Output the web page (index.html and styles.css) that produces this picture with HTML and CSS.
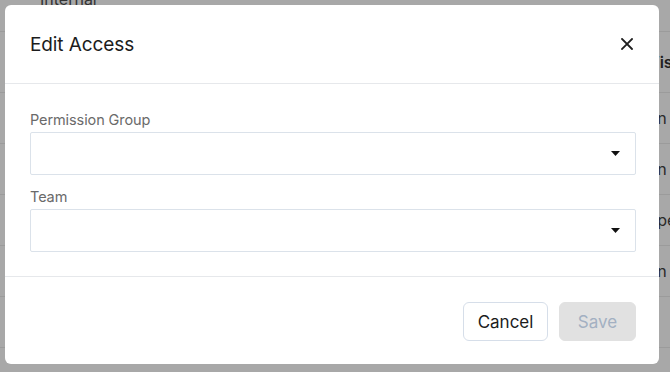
FILE: index.html
```html
<!DOCTYPE html>
<html lang="en">
<head>
<meta charset="utf-8">
<title>Edit Access</title>
<link rel="stylesheet" href="styles.css">
</head>
<body>
<div class="page">
  <div class="table">
    <div class="row row-top"><span class="cell-left">Internal</span></div>
    <div class="row row-head"><span class="cell-right head">Visibility</span></div>
    <div class="row"><span class="cell-right cell-short">In</span></div>
    <div class="row"><span class="cell-right cell-short">In</span></div>
    <div class="row"><span class="cell-right cell-open">Open</span></div>
    <div class="row"><span class="cell-right cell-short">In</span></div>
    <div class="row"></div>
  </div>
</div>

<div class="modal" role="dialog" aria-labelledby="modal-title">
  <div class="modal-header">
    <h2 class="modal-title" id="modal-title">Edit Access</h2>
    <button class="close-btn" aria-label="Close">
      <svg width="12" height="12" viewBox="0 0 12 12"><path d="M1 1 L11 11 M11 1 L1 11" stroke="#1f1f1f" stroke-width="1.8" stroke-linecap="square" fill="none"/></svg>
    </button>
  </div>
  <div class="modal-body">
    <div class="field">
      <label class="field-label">Permission Group</label>
      <div class="select">
        <svg class="caret" width="9" height="5" viewBox="0 0 9 5"><path d="M0 0 H9 L4.5 5 Z" fill="#111"/></svg>
      </div>
    </div>
    <div class="field">
      <label class="field-label">Team</label>
      <div class="select">
        <svg class="caret" width="9" height="5" viewBox="0 0 9 5"><path d="M0 0 H9 L4.5 5 Z" fill="#111"/></svg>
      </div>
    </div>
  </div>
  <div class="modal-footer">
    <button class="btn btn-cancel">Cancel</button>
    <button class="btn btn-save" disabled>Save</button>
  </div>
</div>
</body>
</html>
```

FILE: styles.css
```css
* { box-sizing: border-box; }

html, body {
  margin: 0;
  padding: 0;
  width: 670px;
  height: 372px;
  overflow: hidden;
  background: #a8a8a8;
  font-family: "Inter", "Liberation Sans", sans-serif;
}

.page {
  width: 670px;
  height: 372px;
  overflow: hidden;
}

.table {
  display: flex;
  flex-direction: column;
  margin-top: -19px;
}

.row {
  height: 51px;
  border-bottom: 1px solid #9b9b9b;
  display: flex;
  align-items: center;
  font-size: 16px;
  color: #2a2a2a;
  white-space: nowrap;
  overflow: hidden;
}

.row-head {
  height: 61px;
}

.row-top {
  align-items: flex-start;
  padding-top: 8px;
}

.cell-left {
  padding-left: 40px;
  color: #333;
}

.cell-right {
  padding-left: 648px;
}

.cell-short {
  padding-left: 653px;
}

.cell-open {
  padding-left: 645px;
}

.head {
  font-weight: 600;
  color: #1f1f1f;
}

.modal {
  position: absolute;
  left: 5px;
  top: 5px;
  width: 654px;
  height: 359px;
  background: #fff;
  border-radius: 6px;
  display: flex;
  flex-direction: column;
}

.modal-header {
  height: 79px;
  padding: 0 26px 0 25px;
  display: flex;
  align-items: center;
  justify-content: space-between;
  border-bottom: 1px solid #e6e8eb;
}

.modal-title {
  margin: 0;
  font-size: 19px;
  font-weight: 400;
  color: #1c1c1c;
  letter-spacing: -0.1px;
}

.close-btn {
  border: 0;
  background: transparent;
  padding: 0;
  width: 12px;
  height: 12px;
  display: flex;
  cursor: pointer;
}

.modal-body {
  padding: 26px 23px 24px 25px;
  display: flex;
  flex-direction: column;
  gap: 12px;
  border-bottom: 1px solid #e6e8eb;
}

.field {
  display: flex;
  flex-direction: column;
  gap: 2px;
}

.field-label {
  font-size: 14.5px;
  line-height: 20px;
  color: #6a6a6a;
  letter-spacing: -0.1px;
}

.select {
  height: 43px;
  border: 1px solid #dbe2ea;
  border-radius: 2px;
  display: flex;
  align-items: center;
  justify-content: flex-end;
  padding-right: 15px;
}

.caret {
  display: block;
}

.modal-footer {
  padding: 25px 23px 23px 25px;
  display: flex;
  justify-content: flex-end;
  gap: 11px;
}

.btn {
  height: 39px;
  border-radius: 6px;
  font-family: "Inter", "Liberation Sans", sans-serif;
  font-size: 17px;
  padding: 0;
  display: flex;
  align-items: center;
  justify-content: center;
}

.btn-cancel {
  width: 85px;
  background: #fff;
  border: 1px solid #d6dee9;
  color: #1c1c1c;
}

.btn-save {
  width: 77px;
  background: #e1e1e1;
  border: 1px solid #e1e1e1;
  color: #a3b0c2;
}
```
